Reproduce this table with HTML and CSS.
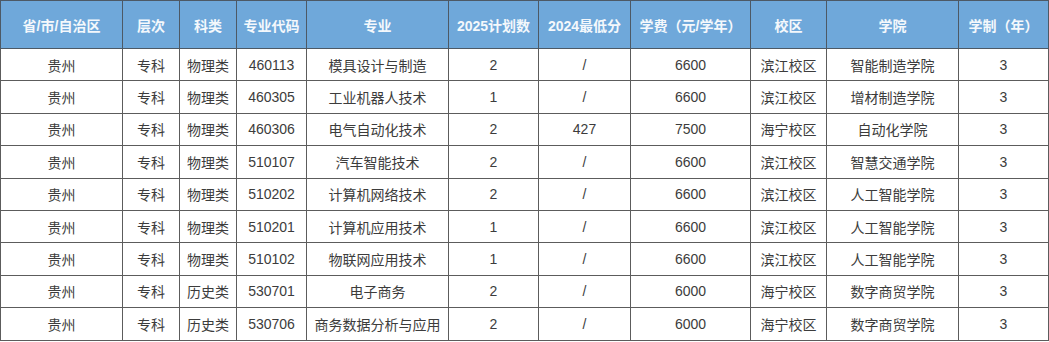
FILE: index.html
```html
<!DOCTYPE html>
<html lang="zh-CN">
<head>
    <meta charset="UTF-8">
    <title>招生计划</title>
    <link rel="stylesheet" href="styles.css">
</head>
<body>
    <table class="plan">
        <colgroup>
            <col class="c-prov"><col class="c-level"><col class="c-type"><col class="c-code">
            <col class="c-major"><col class="c-plan"><col class="c-score"><col class="c-fee">
            <col class="c-campus"><col class="c-college"><col class="c-years">
        </colgroup>
        <thead>
            <tr>
                <th>省/市/自治区</th>
                <th>层次</th>
                <th>科类</th>
                <th>专业代码</th>
                <th>专业</th>
                <th>2025计划数</th>
                <th>2024最低分</th>
                <th>学费（元/学年）</th>
                <th>校区</th>
                <th>学院</th>
                <th>学制（年）</th>
            </tr>
        </thead>
        <tbody>
            <tr><td>贵州</td><td>专科</td><td>物理类</td><td>460113</td><td>模具设计与制造</td><td>2</td><td>/</td><td>6600</td><td>滨江校区</td><td>智能制造学院</td><td>3</td></tr>
            <tr><td>贵州</td><td>专科</td><td>物理类</td><td>460305</td><td>工业机器人技术</td><td>1</td><td>/</td><td>6600</td><td>滨江校区</td><td>增材制造学院</td><td>3</td></tr>
            <tr><td>贵州</td><td>专科</td><td>物理类</td><td>460306</td><td>电气自动化技术</td><td>2</td><td>427</td><td>7500</td><td>海宁校区</td><td>自动化学院</td><td>3</td></tr>
            <tr><td>贵州</td><td>专科</td><td>物理类</td><td>510107</td><td>汽车智能技术</td><td>2</td><td>/</td><td>6600</td><td>滨江校区</td><td>智慧交通学院</td><td>3</td></tr>
            <tr><td>贵州</td><td>专科</td><td>物理类</td><td>510202</td><td>计算机网络技术</td><td>2</td><td>/</td><td>6600</td><td>滨江校区</td><td>人工智能学院</td><td>3</td></tr>
            <tr><td>贵州</td><td>专科</td><td>物理类</td><td>510201</td><td>计算机应用技术</td><td>1</td><td>/</td><td>6600</td><td>滨江校区</td><td>人工智能学院</td><td>3</td></tr>
            <tr><td>贵州</td><td>专科</td><td>物理类</td><td>510102</td><td>物联网应用技术</td><td>1</td><td>/</td><td>6600</td><td>滨江校区</td><td>人工智能学院</td><td>3</td></tr>
            <tr><td>贵州</td><td>专科</td><td>历史类</td><td>530701</td><td>电子商务</td><td>2</td><td>/</td><td>6000</td><td>海宁校区</td><td>数字商贸学院</td><td>3</td></tr>
            <tr><td>贵州</td><td>专科</td><td>历史类</td><td>530706</td><td>商务数据分析与应用</td><td>2</td><td>/</td><td>6000</td><td>海宁校区</td><td>数字商贸学院</td><td>3</td></tr>
        </tbody>
    </table>
</body>
</html>
```

FILE: styles.css
```css
body {
    margin: 0;
    background: #ffffff;
    font-family: "Liberation Sans", "Noto Sans CJK SC", sans-serif;
}
.plan {
    width: 1048px;
    table-layout: fixed;
    border-collapse: collapse;
    border: 1px solid #3f4a56;
    font-size: 14px;
}
.c-prov { width: 122px; }
.c-level { width: 57px; }
.c-type { width: 57px; }
.c-code { width: 70px; }
.c-major { width: 142px; }
.c-plan { width: 90px; }
.c-score { width: 92px; }
.c-fee { width: 120px; }
.c-campus { width: 76px; }
.c-college { width: 132px; }
.c-years { width: 90px; }
.plan th {
    height: 47px;
    padding: 0;
    background: #6fa8da;
    color: #f4f8fc;
    font-weight: bold;
    text-align: center;
    border: 1px solid #4d5965;
}
.plan td {
    height: 31.4px;
    padding: 0;
    color: #3c3c3c;
    text-align: center;
    border: 1px solid #5c5c5c;
}
```
